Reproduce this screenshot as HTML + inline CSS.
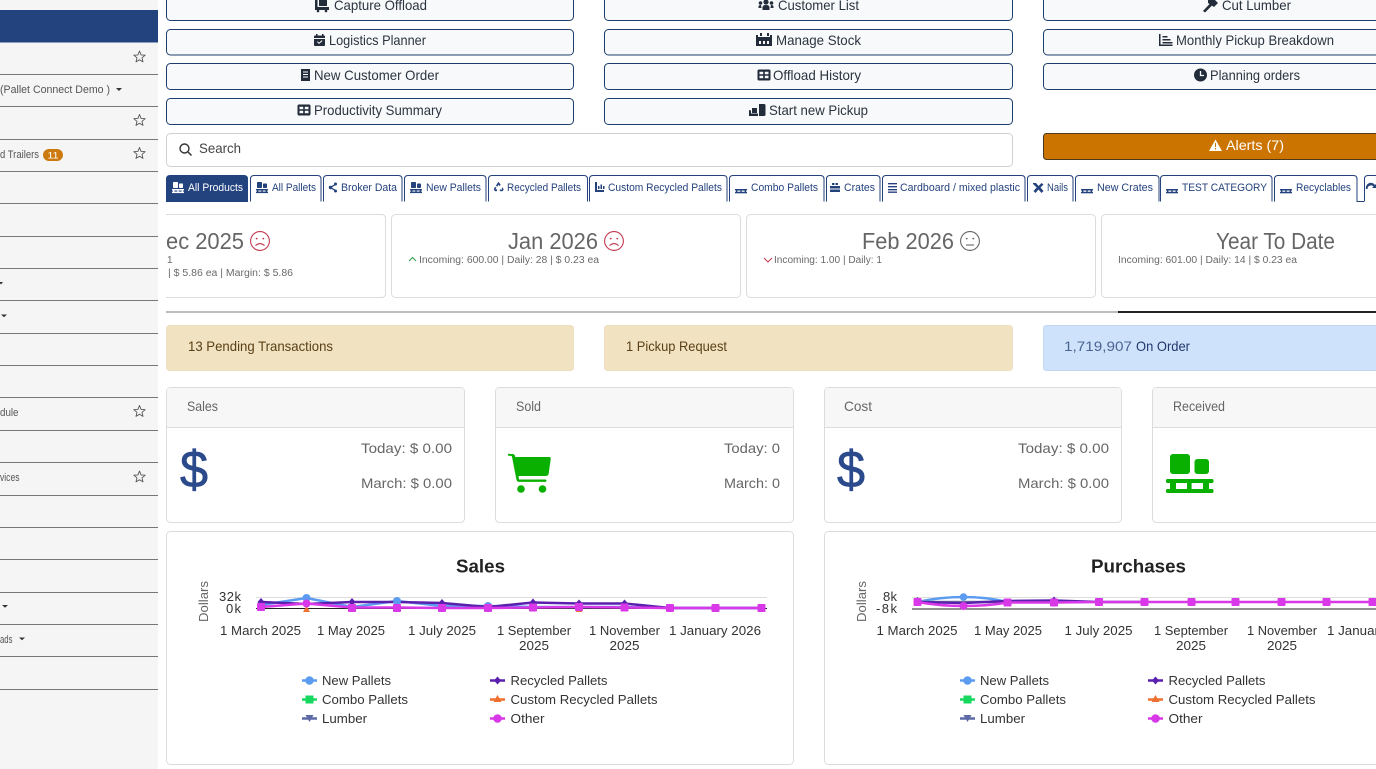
<!DOCTYPE html>
<html lang="en"><head><meta charset="utf-8"><title>Dashboard</title>
<style>
html,body{margin:0;padding:0;width:1376px;height:769px;overflow:hidden;background:#fff}
svg{display:block;font-family:"Liberation Sans",sans-serif;filter:blur(.25px)}
.b{font-size:14px;fill:#2b3440}
.t{font-size:11px;fill:#24427c}
.s{font-size:11px;fill:#555}
.m{font-size:10px;fill:#6a6a6a}
.h{font-size:23px;fill:#666}
.c{font-size:14px;fill:#666}
.v{font-size:14px;fill:#666}
.x{font-size:13px;fill:#333}
.l{font-size:13px;fill:#333}
.g{font-size:13px;fill:#666}
.ti{font-size:18px;font-weight:bold;fill:#222}
.btn{fill:#f8f9fa;stroke:#1d3f6e;stroke-width:1}
.card{fill:#fff;stroke:#dcdcdc;stroke-width:1}
.tab{fill:#fff;stroke:#24427c;stroke-width:1}
.ln{stroke:#777;stroke-width:1}
.ser{fill:none;stroke-width:2.5;stroke-linejoin:round;stroke-linecap:round}
</style></head><body>
<svg width="1376" height="769" viewBox="0 0 1376 769" xmlns="http://www.w3.org/2000/svg">
<defs>
<g id="pal"><rect x="1" y="0" width="5" height="6" rx=".7"/><rect x="7" y="1.500" width="4" height="4.500" rx=".7"/><rect x="0" y="7" width="12" height="1.500"/><rect x="0" y="9.600" width="12" height="1.500"/><rect x="1" y="8" width="1.400" height="2"/><rect x="5.300" y="8" width="1.400" height="2"/><rect x="9.600" y="8" width="1.400" height="2"/></g>
<g id="skid"><rect x="0" y="0" width="12" height="1.500"/><rect x="0" y="2.800" width="12" height="1.500"/><rect x="1" y="1" width="1.400" height="2"/><rect x="5.300" y="1" width="1.400" height="2"/><rect x="9.600" y="1" width="1.400" height="2"/></g>
<path id="star" fill="none" stroke="#555" stroke-width=".9" stroke-linejoin="round" d="M0-6 1.600-2.100 5.700-1.800 2.500.8 3.500 4.900 0 2.700-3.500 4.900-2.500.8-5.700-1.800-1.600-2.100Z"/>
<g id="tbl"><path fill-rule="evenodd" d="M1.500 0h10A1.500 1.500 0 0 1 13 1.500v8a1.500 1.500 0 0 1-1.500 1.500h-10A1.500 1.500 0 0 1 0 9.500v-8A1.500 1.500 0 0 1 1.500 0ZM2 2.300V4.800H5.700V2.300ZM7.300 2.300V4.800H11V2.300ZM2 6.200V8.800H5.700V6.200ZM7.300 6.200V8.800H11V6.200Z"/></g>
<g id="sad" fill="none" stroke="#c23a50" stroke-width="1.100"><circle r="9.400"/><path d="M-4.500 4.600Q0 .6 4.500 4.600"/><circle cx="-3.300" cy="-2.400" r=".9" fill="#c23a50" stroke="none"/><circle cx="3.300" cy="-2.400" r=".9" fill="#c23a50" stroke="none"/></g>
</defs>
<rect width="1376" height="769" fill="#fff"/>

<!-- sidebar -->
<rect width="158" height="769" fill="#f5f5f5"/>
<rect y="10" width="158" height="32.500" fill="#23437f"/>
<g class="ln">
<path d="M0 74.500H158M0 106.500H158M0 139.500H158M0 171.500H158M0 203.500H158M0 236.500H158M0 268.500H158M0 300.500H158M0 333.500H158M0 365.500H158M0 397.500H158M0 430.500H158M0 462.500H158M0 495.500H158M0 527.500H158M0 559.500H158M0 592.500H158M0 624.500H158M0 656.500H158M0 689.500H158"/>
</g>
<use href="#star" x="139.500" y="57"/><use href="#star" x="139.500" y="120.500"/><use href="#star" x="139.500" y="153.500"/><use href="#star" x="139.500" y="411.500"/><use href="#star" x="139.500" y="477"/>
<text class="s" x="0" y="93" textLength="110" lengthAdjust="spacingAndGlyphs">(Pallet Connect Demo )</text>
<path d="M116 88h6l-3 3z" fill="#333"/>
<text class="s" x="0" y="158" textLength="39" lengthAdjust="spacingAndGlyphs">d Trailers</text>
<rect x="43" y="149" width="20" height="12" rx="6" fill="#cc7a10"/>
<text x="47.500" y="158.500" font-size="9.500" fill="#fff" textLength="11" lengthAdjust="spacingAndGlyphs">11</text>
<path d="M-1 282h4l-2 2.500z" fill="#333"/>
<path d="M1 314.500h6l-3 2.800z" fill="#333"/>
<text class="s" x="0" y="416" textLength="18.500" lengthAdjust="spacingAndGlyphs">dule</text>
<text class="s" x="0" y="481" textLength="19.500" lengthAdjust="spacingAndGlyphs">vices</text>
<path d="M2 605h6l-3 2.800z" fill="#333"/>
<text class="s" x="0" y="643" textLength="12.500" lengthAdjust="spacingAndGlyphs">ads</text>
<path d="M19 637.500h6l-3 2.800z" fill="#333"/>

<!-- buttons -->
<rect class="btn" x="166.500" y="-10" width="407" height="30.500" rx="4"/>
<rect class="btn" x="604.500" y="-10" width="408" height="30.500" rx="4"/>
<rect class="btn" x="1043.500" y="-10" width="400" height="30.500" rx="4"/>
<rect class="btn" x="166.500" y="29.500" width="407" height="25.500" rx="4"/>
<rect class="btn" x="604.500" y="29.500" width="408" height="25.500" rx="4"/>
<rect class="btn" x="1043.500" y="29.500" width="400" height="25.500" rx="4"/>
<rect class="btn" x="166.500" y="63.500" width="407" height="26" rx="4"/>
<rect class="btn" x="604.500" y="63.500" width="408" height="26" rx="4"/>
<rect class="btn" x="1043.500" y="63.500" width="400" height="26" rx="4"/>
<rect class="btn" x="166.500" y="98.500" width="407" height="26" rx="4"/>
<rect class="btn" x="604.500" y="98.500" width="408" height="26" rx="4"/>

<text class="b" x="334" y="10" textLength="93" lengthAdjust="spacingAndGlyphs">Capture Offload</text>
<text class="b" x="778" y="10" textLength="81" lengthAdjust="spacingAndGlyphs">Customer List</text>
<text class="b" x="1222" y="10" textLength="69" lengthAdjust="spacingAndGlyphs">Cut Lumber</text>
<text class="b" x="329" y="45" textLength="97" lengthAdjust="spacingAndGlyphs">Logistics Planner</text>
<text class="b" x="776" y="45" textLength="85" lengthAdjust="spacingAndGlyphs">Manage Stock</text>
<text class="b" x="1176" y="45" textLength="158" lengthAdjust="spacingAndGlyphs">Monthly Pickup Breakdown</text>
<text class="b" x="314" y="80" textLength="125" lengthAdjust="spacingAndGlyphs">New Customer Order</text>
<text class="b" x="773" y="80" textLength="88" lengthAdjust="spacingAndGlyphs">Offload History</text>
<text class="b" x="1210" y="80" textLength="90" lengthAdjust="spacingAndGlyphs">Planning orders</text>
<text class="b" x="314" y="115" textLength="128" lengthAdjust="spacingAndGlyphs">Productivity Summary</text>
<text class="b" x="769" y="115" textLength="99" lengthAdjust="spacingAndGlyphs">Start new Pickup</text>

<g fill="#222c3a">
<!-- capture offload -->
<path d="M315 0h2.500v7H329v3h-14zM319 -2h8v8h-8z"/><circle cx="318" cy="11" r="1.300"/><circle cx="326" cy="11" r="1.300"/>
<!-- customer list -->
<circle cx="766" cy="2" r="2.600"/><circle cx="760.500" cy="3" r="1.800"/><circle cx="771.500" cy="3" r="1.800"/><path d="M762.500 10V7.500q0-2.500 3.500-2.500t3.500 2.500V10zM758.500 8V6.500q0-1.500 2.500-1.500l.5 3zM773.500 8V6.500q0-1.500-2.500-1.500l-.5 3z"/>
<!-- cut lumber -->
<path d="M1203 11l7-7.500 2 2-7 7zM1208 0l6-1 4 4-4 4-6-4z"/>
<!-- logistics planner -->
<path fill-rule="evenodd" d="M316 34h1.500v1.500h4.500V34h1.500v1.500h.5q1 0 1 1V38h-11v-1.500q0-1 1-1h1zM314 39h11v6q0 1-1 1h-9q-1 0-1-1zM317 42l2 2 3.500-3-.8-.7-2.700 2.300-1.200-1.200z"/>
<!-- manage stock -->
<path fill-rule="evenodd" d="M756 35h2v2h12v-2h2v11h-16zM759 41v3h2v-3zM763 41v3h2v-3zM767 41v3h2v-3zM760 33h2v3h-2zM767 33h2v3h-2z"/>
<!-- monthly -->
<path d="M1159 34h1.500v10.500h12V46H1159zM1162.500 36h5v1.500h-5zM1162.500 39h8v1.500h-8zM1162.500 42h10v1.500h-10z"/>
<!-- new customer order -->
<path fill-rule="evenodd" d="M301 69h9v12h-9zM303 71.500v1h5v-1zM303 74v1h5v-1zM303 76.500v1h5v-1z"/>
<use href="#tbl" x="757.500" y="69.500" />
<circle cx="1200.500" cy="75" r="6.500"/>
<use href="#tbl" x="297.500" y="104.500"/>
<!-- start new pickup -->
<path d="M749 110l2 .5v3h7v2.500h-9zM752 108h5v5h-5zM759 104h5q1.500 0 1.500 1.500v9q0 1.500-1.500 1.500h-5z"/>
</g>
<path d="M1200.500 71v4.500h3.500" stroke="#f8f9fa" fill="none" stroke-width="1.300"/>

<!-- search + alerts -->
<rect x="166.500" y="133.500" width="846" height="33" rx="4" fill="#fff" stroke="#d0d0d0"/>
<circle cx="184.500" cy="148.500" r="4.500" fill="none" stroke="#333" stroke-width="1.400"/><path d="M188 152l3.500 3.500" stroke="#333" stroke-width="1.500"/>
<text x="199" y="153" font-size="14" fill="#444" textLength="42" lengthAdjust="spacingAndGlyphs">Search</text>
<rect x="1043.500" y="133.500" width="400" height="26" rx="3" fill="#cc7400" stroke="#4d3a1c"/>
<path d="M1215.500 139.500l6.500 11.500h-13z" fill="#fff"/><path d="M1215.500 143v4M1215.500 148v1.500" stroke="#cc7400" stroke-width="1.100"/>
<text x="1226" y="150" font-size="14" fill="#fff" textLength="58" lengthAdjust="spacingAndGlyphs">Alerts (7)</text>

<!-- tabs -->
<path d="M166 202V179q0-4 4-4H244q4 0 4 4V202Z" fill="#23437f"/>
<g class="tab">
<path d="M250.500 201.500V179q0-3.500 3.500-3.500h63.500q3.500 0 3.500 3.500v22.500"/>
<path d="M323.500 201.500V179q0-3.500 3.500-3.500h71.500q3.500 0 3.500 3.500v22.500"/>
<path d="M404.500 201.500V179q0-3.500 3.500-3.500h74.500q3.500 0 3.500 3.500v22.500"/>
<path d="M488.500 201.500V179q0-3.500 3.500-3.500h92q3.500 0 3.500 3.500v22.500"/>
<path d="M589.500 201.500V179q0-3.500 3.500-3.500h130.500q3.500 0 3.500 3.500v22.500"/>
<path d="M729.500 201.500V179q0-3.500 3.500-3.500h87.500q3.500 0 3.500 3.500v22.500"/>
<path d="M826.500 201.500V179q0-3.500 3.500-3.500h46.500q3.500 0 3.500 3.500v22.500"/>
<path d="M882.500 201.500V179q0-3.500 3.500-3.500h135.500q3.500 0 3.500 3.500v22.500"/>
<path d="M1027.500 201.500V179q0-3.500 3.500-3.500h38.500q3.500 0 3.500 3.500v22.500"/>
<path d="M1075.500 201.500V179q0-3.500 3.500-3.500h76.500q3.500 0 3.500 3.500v22.500"/>
<path d="M1160.500 201.500V179q0-3.500 3.500-3.500h104.500q3.500 0 3.500 3.500v22.500"/>
<path d="M1274.500 201.500V179q0-3.500 3.500-3.500h75.500q3.500 0 3.500 3.500v22.500h7"/>
<path d="M1364.500 201.500V179q0-3.500 3.500-3.500h12"/>
</g>
<text class="t" style="fill:#fff" x="188" y="191" textLength="55" lengthAdjust="spacingAndGlyphs">All Products</text>
<text class="t" x="272" y="191" textLength="44" lengthAdjust="spacingAndGlyphs">All Pallets</text>
<text class="t" x="341" y="191" textLength="56" lengthAdjust="spacingAndGlyphs">Broker Data</text>
<text class="t" x="426" y="191" textLength="55" lengthAdjust="spacingAndGlyphs">New Pallets</text>
<text class="t" x="507" y="191" textLength="74" lengthAdjust="spacingAndGlyphs">Recycled Pallets</text>
<text class="t" x="608" y="191" textLength="114" lengthAdjust="spacingAndGlyphs">Custom Recycled Pallets</text>
<text class="t" x="751" y="191" textLength="67" lengthAdjust="spacingAndGlyphs">Combo Pallets</text>
<text class="t" x="844" y="191" textLength="31" lengthAdjust="spacingAndGlyphs">Crates</text>
<text class="t" x="900" y="191" textLength="120" lengthAdjust="spacingAndGlyphs">Cardboard / mixed plastic</text>
<text class="t" x="1047" y="191" textLength="21" lengthAdjust="spacingAndGlyphs">Nails</text>
<text class="t" x="1097" y="191" textLength="56" lengthAdjust="spacingAndGlyphs">New Crates</text>
<text class="t" x="1182" y="191" textLength="85" lengthAdjust="spacingAndGlyphs">TEST CATEGORY</text>
<text class="t" x="1296" y="191" textLength="55" lengthAdjust="spacingAndGlyphs">Recyclables</text>
<use href="#pal" x="172" y="182" fill="#fff"/>
<g fill="#24427c">
<use href="#pal" x="256" y="182"/>
<path d="M330 187l5-3v1.500l-3.500 2 3.500 2v1.500l-5-3z"/><circle cx="330.500" cy="187.500" r="1.700"/><circle cx="335.500" cy="184" r="1.500"/><circle cx="335.500" cy="191" r="1.500"/>
<use href="#pal" x="410" y="182"/>
<path d="M498.500 182l2 3-1.200.7-.8-1.300-1.200 2-1.200-.7zM502.500 187.500l1 2-1 1.500h-2.500v-1.300h2zM495 187l1.200.7-1 1.800h1.600V191H495l-1-1.500z" stroke="#24427c" stroke-width=".4"/>
<path d="M595 182h2v8h7v2h-9zM598 186h1.500v3H598zM600.500 184.500h1.500V189h-1.500zM603 186h1.500v3H603z"/>
<use href="#skid" x="735" y="189"/>
<path d="M830 186h10v2.500h-10zM830 189.500h10v2.500h-10zM832 183h2.500v2h-2.500zM835.500 183h2.500v2h-2.500z"/>
<path d="M888 183h9v1.400h-9zM888 186h9v1.400h-9zM888 189h9v1.400h-9zM888 191.500h9v1.400h-9z"/>
<path d="M1033 183l3 0 2.500 3 3-3 2 1.500-3 3 3 3.500-2 2-3-3.500-3 3.500-2-2 3.200-3.500-3.700-3.500z"/>
<use href="#skid" x="1081" y="189"/>
<use href="#skid" x="1166" y="189"/>
<use href="#skid" x="1280" y="189"/>
<path d="M1366 189a5 5 0 0 1 9-4l1-1v4h-4l1.500-1.500a3.500 3.500 0 0 0-6 2.500z"/>
</g>

<!-- stat cards -->
<path d="M166 214.500H382a3.500 3.500 0 0 1 3.500 3.500v76a3.500 3.500 0 0 1-3.500 3.500H166" fill="#fff" stroke="#dcdcdc"/>
<rect class="card" x="391.500" y="214.500" width="349" height="83" rx="4"/>
<rect class="card" x="746.500" y="214.500" width="349" height="83" rx="4"/>
<rect class="card" x="1101.500" y="214.500" width="349" height="83" rx="4"/>
<text class="h" x="166" y="249" textLength="78" lengthAdjust="spacingAndGlyphs">ec 2025</text>
<use href="#sad" x="260" y="241"/>
<text class="m" x="167" y="263" textLength="4">1</text>
<text class="m" x="168" y="276" textLength="125" lengthAdjust="spacingAndGlyphs">| $ 5.86 ea | Margin: $ 5.86</text>
<text class="h" x="508" y="249" textLength="90" lengthAdjust="spacingAndGlyphs">Jan 2026</text>
<use href="#sad" x="614" y="241"/>
<path d="M409 261l3.500-3.500 3.500 3.500" fill="none" stroke="#2f9d4a" stroke-width="1"/>
<text class="m" x="419" y="263" textLength="180" lengthAdjust="spacingAndGlyphs">Incoming: 600.00 | Daily: 28 | $ 0.23 ea</text>
<text class="h" x="862" y="249" textLength="92" lengthAdjust="spacingAndGlyphs">Feb 2026</text>
<g transform="translate(970 241)" fill="none" stroke="#666" stroke-width="1.100"><circle r="9.400"/><path d="M-4 4H4"/><circle cx="-3.300" cy="-2.400" r=".9" fill="#666" stroke="none"/><circle cx="3.300" cy="-2.400" r=".9" fill="#666" stroke="none"/></g>
<path d="M764 258l4 4 4-4" fill="none" stroke="#c23a50" stroke-width="1"/>
<text class="m" x="774" y="263" textLength="108" lengthAdjust="spacingAndGlyphs">Incoming: 1.00 | Daily: 1</text>
<text class="h" x="1216" y="249" textLength="119" lengthAdjust="spacingAndGlyphs">Year To Date</text>
<text class="m" x="1118" y="263" textLength="179" lengthAdjust="spacingAndGlyphs">Incoming: 601.00 | Daily: 14 | $ 0.23 ea</text>

<rect x="166" y="311" width="952" height="2" fill="#bdbdbd"/>
<rect x="1118" y="311" width="258" height="2" fill="#222"/>

<!-- notices -->
<rect x="166.500" y="325.500" width="407" height="45" rx="3" fill="#f1e2c2" stroke="#ecdfc4"/>
<rect x="604.500" y="325.500" width="408" height="45" rx="3" fill="#f1e2c2" stroke="#ecdfc4"/>
<rect x="1043.500" y="325.500" width="400" height="45" rx="3" fill="#cfe2fb" stroke="#c3d6f0"/>
<text x="188" y="351" font-size="14" fill="#5a4015" textLength="145" lengthAdjust="spacingAndGlyphs">13 Pending Transactions</text>
<text x="626" y="351" font-size="14" fill="#5a4015" textLength="101" lengthAdjust="spacingAndGlyphs">1 Pickup Request</text>
<text x="1064" y="351" font-size="14" fill="#4a6592" textLength="68" lengthAdjust="spacingAndGlyphs">1,719,907</text>
<text x="1136" y="351" font-size="14" fill="#20386c" textLength="54" lengthAdjust="spacingAndGlyphs">On Order</text>

<!-- metric cards -->
<g>
<rect class="card" x="166.500" y="387.500" width="298" height="135" rx="4"/>
<rect class="card" x="495.500" y="387.500" width="298" height="135" rx="4"/>
<rect class="card" x="824.500" y="387.500" width="297" height="135" rx="4"/>
<rect class="card" x="1152.500" y="387.500" width="300" height="135" rx="4"/>
<path d="M167 427V391q0-3 3-3H461q3 0 3 3V427ZM496 427V391q0-3 3-3H790q3 0 3 3V427ZM825 427V391q0-3 3-3H1118q3 0 3 3V427ZM1153 427V391q0-3 3-3H1376V427Z" fill="#f7f7f7"/>
<path d="M166 427.500H465M495 427.500H794M824 427.500H1122M1152 427.500H1376" stroke="#dcdcdc"/>
</g>
<text class="c" x="187" y="411" textLength="31" lengthAdjust="spacingAndGlyphs">Sales</text>
<text class="c" x="516" y="411" textLength="25" lengthAdjust="spacingAndGlyphs">Sold</text>
<text class="c" x="844" y="411" textLength="28" lengthAdjust="spacingAndGlyphs">Cost</text>
<text class="c" x="1173" y="411" textLength="52" lengthAdjust="spacingAndGlyphs">Received</text>
<text class="v" x="361" y="453" textLength="91" lengthAdjust="spacingAndGlyphs">Today: $ 0.00</text>
<text class="v" x="361" y="488" textLength="91" lengthAdjust="spacingAndGlyphs">March: $ 0.00</text>
<text class="v" x="724" y="453" textLength="56" lengthAdjust="spacingAndGlyphs">Today: 0</text>
<text class="v" x="724" y="488" textLength="56" lengthAdjust="spacingAndGlyphs">March: 0</text>
<text class="v" x="1018" y="453" textLength="91" lengthAdjust="spacingAndGlyphs">Today: $ 0.00</text>
<text class="v" x="1018" y="488" textLength="91" lengthAdjust="spacingAndGlyphs">March: $ 0.00</text>
<text x="180" y="487" font-size="52" fill="#2a4a8c" stroke="#2a4a8c" stroke-width=".7" textLength="28" lengthAdjust="spacingAndGlyphs">$</text>
<text x="837" y="487" font-size="52" fill="#2a4a8c" stroke="#2a4a8c" stroke-width=".7" textLength="28" lengthAdjust="spacingAndGlyphs">$</text>
<!-- cart -->
<g fill="#0ab000">
<path d="M509.500 454h3q2 0 2.500 2l.3 1H549q2 0 1.700 2l-2 14.500q-.3 2.500-3 2.500H518.500l.5 3.500H545q1.500 0 1.500 1.200t-1.500 1.200H519q-2 0-2.500-2l-4.500-23q-.2-1-1-1h-1.500q-1.500 0-1.500-1.200t1.500-1.200z"/>
<circle cx="521" cy="489" r="3.800"/><circle cx="542.500" cy="489" r="3.800"/>
<!-- pallet -->
<rect x="1170" y="454" width="20" height="20" rx="3"/>
<rect x="1194.500" y="459" width="14.500" height="15" rx="3"/>
<rect x="1166" y="479" width="47.500" height="4" rx="1.500"/>
<rect x="1166" y="489" width="47.500" height="4" rx="1.500"/>
<rect x="1170" y="482" width="6" height="8"/><rect x="1187" y="482" width="4.600" height="8"/><rect x="1203" y="482" width="6" height="8"/>
</g>

<!-- chart cards -->
<rect class="card" x="166.500" y="531.500" width="627" height="233" rx="4"/>
<rect class="card" x="824.500" y="531.500" width="640" height="233" rx="4"/>
<text class="ti" x="456" y="572.500" textLength="49" lengthAdjust="spacingAndGlyphs">Sales</text>
<text class="ti" x="1091" y="572.500" textLength="95" lengthAdjust="spacingAndGlyphs">Purchases</text>

<!-- sales chart -->
<text class="g" transform="translate(208 622) rotate(-90)" textLength="41" lengthAdjust="spacingAndGlyphs">Dollars</text>
<text class="x" x="219" y="601" textLength="22">32k</text>
<text class="x" x="226" y="613" textLength="15">0k</text>
<path d="M256 597.500H767" stroke="#dedede"/>
<path d="M256 608.500H767" stroke="#222"/>
<polyline class="ser" stroke="#5b9bf0" points="261,605 306.500,598 352,607 397,601 442,606 488,606 533,607 579,607 624.500,607 670,608 715.500,608 761.500,608"/>
<polyline class="ser" stroke="#5a1fae" points="261,602 306.500,604 352,602 397,602 442,603 488,607 533,602.500 579,603.500 624.500,603.500 670,608 715.500,608 761.500,608"/>
<polyline class="ser" stroke="#d838e8" points="261,607 306.500,603.500 352,607.500 397,607.500 442,608 488,608 533,607.500 579,607 624.500,607.500 670,608 715.500,608 761.500,608"/>
<g fill="#5a1fae"><path d="M261 598l3.500 4-3.500 4-3.500-4zM352 598l3.500 4-3.500 4-3.500-4zM397 598l3.500 4-3.500 4-3.500-4zM442 599l3.500 4-3.500 4-3.500-4zM533 598.500l3.500 4-3.500 4-3.500-4zM579 599.500l3.500 4-3.500 4-3.500-4zM624.500 599.500l3.500 4-3.500 4-3.500-4z"/></g>
<g fill="#5b9bf0"><circle cx="306.500" cy="598" r="4"/><circle cx="397" cy="601" r="4"/><circle cx="488" cy="606" r="4"/></g>
<path d="M306.500 606l3.500 6h-7zM579 606l3.500 6h-7z" fill="#f07030"/>
<g fill="#d838e8"><rect x="257" y="603" width="8" height="8" rx="1"/><circle cx="306.500" cy="603.500" r="4"/><rect x="348" y="604" width="8" height="8" rx="1"/><rect x="393" y="604" width="8" height="8" rx="1"/><rect x="438" y="604" width="8" height="8" rx="1"/><rect x="484" y="604" width="8" height="8" rx="1"/><rect x="529" y="603.500" width="8" height="8" rx="1"/><rect x="575" y="603" width="8" height="8" rx="1"/><rect x="620.500" y="603.500" width="8" height="8" rx="1"/><rect x="666" y="604" width="8" height="8" rx="1"/><rect x="711.500" y="604" width="8" height="8" rx="1"/><rect x="757.500" y="604" width="8" height="8" rx="1"/></g>

<text class="x" x="220" y="635" textLength="81" lengthAdjust="spacingAndGlyphs">1 March 2025</text>
<text class="x" x="317" y="635" textLength="68" lengthAdjust="spacingAndGlyphs">1 May 2025</text>
<text class="x" x="408" y="635" textLength="68" lengthAdjust="spacingAndGlyphs">1 July 2025</text>
<text class="x" x="497" y="635" textLength="74" lengthAdjust="spacingAndGlyphs">1 September</text>
<text class="x" x="519" y="650" textLength="30" lengthAdjust="spacingAndGlyphs">2025</text>
<text class="x" x="589" y="635" textLength="71" lengthAdjust="spacingAndGlyphs">1 November</text>
<text class="x" x="609.500" y="650" textLength="30" lengthAdjust="spacingAndGlyphs">2025</text>
<text class="x" x="669" y="635" textLength="92" lengthAdjust="spacingAndGlyphs">1 January 2026</text>

<!-- sales legend -->
<g id="lg">
<path d="M302 680.500h15" stroke="#5b9bf0" stroke-width="2.500"/><circle cx="309.500" cy="680.500" r="4.300" fill="#5b9bf0"/>
<text class="l" x="322" y="685" textLength="69" lengthAdjust="spacingAndGlyphs">New Pallets</text>
<path d="M302 699.500h15" stroke="#17d85f" stroke-width="2.500"/><rect x="305.500" y="695.500" width="8" height="8" fill="#17d85f"/>
<text class="l" x="322" y="704" textLength="86" lengthAdjust="spacingAndGlyphs">Combo Pallets</text>
<path d="M302 718.500h15" stroke="#5e6aa8" stroke-width="2.500"/><path d="M305.500 715h8l-4 7z" fill="#5e6aa8"/>
<text class="l" x="322" y="723" textLength="45" lengthAdjust="spacingAndGlyphs">Lumber</text>
<path d="M490 680.500h15" stroke="#5a1fae" stroke-width="2.500"/><path d="M497.500 676.500l3.500 4-3.500 4-3.500-4z" fill="#5a1fae"/>
<text class="l" x="510.500" y="685" textLength="97" lengthAdjust="spacingAndGlyphs">Recycled Pallets</text>
<path d="M490 699.500h15" stroke="#f07030" stroke-width="2.500"/><path d="M497.500 695l4 7h-8z" fill="#f07030"/>
<text class="l" x="510.500" y="704" textLength="147" lengthAdjust="spacingAndGlyphs">Custom Recycled Pallets</text>
<path d="M490 718.500h15" stroke="#d838e8" stroke-width="2.500"/><circle cx="497.500" cy="718.500" r="4.300" fill="#d838e8"/>
<text class="l" x="510.500" y="723" textLength="34" lengthAdjust="spacingAndGlyphs">Other</text>
</g>
<use href="#lg" x="658"/>

<!-- purchases chart -->
<text class="g" transform="translate(866 622) rotate(-90)" textLength="41" lengthAdjust="spacingAndGlyphs">Dollars</text>
<text class="x" x="883" y="601" textLength="14">8k</text>
<text class="x" x="876" y="613" textLength="21">-8k</text>
<path d="M912 597.500H1376" stroke="#dedede"/>
<path d="M912 609H1376" stroke="#222" stroke-width="1"/>
<path class="ser" stroke="#5b9bf0" d="M917.500 602Q940 597 963.500 597T1007.500 602"/>
<path class="ser" stroke="#7a8a9a" d="M917.500 602H1007.500"/>
<polyline class="ser" stroke="#5a1fae" points="917.500,602 963.500,603 1007.500,601 1054,600.500 1099,602 1145,602"/>
<path class="ser" stroke="#d838e8" d="M917.500 602Q940 606 963.500 606T1007.500 602.500L1054 602.500 1099 602H1376"/>
<circle cx="963.500" cy="597" r="3.800" fill="#5b9bf0"/>
<path d="M917.500 597l3.500 4-3.500 4-3.500-4zM1054 596.500l3.500 4-3.500 4-3.500-4z" fill="#5a1fae"/>
<g fill="#d838e8"><rect x="913.500" y="598" width="8" height="8" rx="1"/><circle cx="963.500" cy="606" r="4"/><rect x="1003.500" y="598.500" width="8" height="8" rx="1"/><rect x="1050" y="598.500" width="8" height="8" rx="1"/><rect x="1095" y="598" width="8" height="8" rx="1"/><rect x="1140.500" y="598" width="8" height="8" rx="1"/><rect x="1187.500" y="598" width="8" height="8" rx="1"/><rect x="1231.500" y="598" width="8" height="8" rx="1"/><rect x="1277.500" y="598" width="8" height="8" rx="1"/><rect x="1322.500" y="598" width="8" height="8" rx="1"/><rect x="1368.500" y="598" width="8" height="8" rx="1"/></g>

<text class="x" x="876.500" y="635" textLength="81" lengthAdjust="spacingAndGlyphs">1 March 2025</text>
<text class="x" x="974" y="635" textLength="68" lengthAdjust="spacingAndGlyphs">1 May 2025</text>
<text class="x" x="1064.500" y="635" textLength="68" lengthAdjust="spacingAndGlyphs">1 July 2025</text>
<text class="x" x="1154" y="635" textLength="74" lengthAdjust="spacingAndGlyphs">1 September</text>
<text class="x" x="1176" y="650" textLength="30" lengthAdjust="spacingAndGlyphs">2025</text>
<text class="x" x="1247" y="635" textLength="70" lengthAdjust="spacingAndGlyphs">1 November</text>
<text class="x" x="1267" y="650" textLength="30" lengthAdjust="spacingAndGlyphs">2025</text>
<text class="x" x="1327" y="635" textLength="92" lengthAdjust="spacingAndGlyphs">1 January 2026</text>
</svg>
</body></html>
